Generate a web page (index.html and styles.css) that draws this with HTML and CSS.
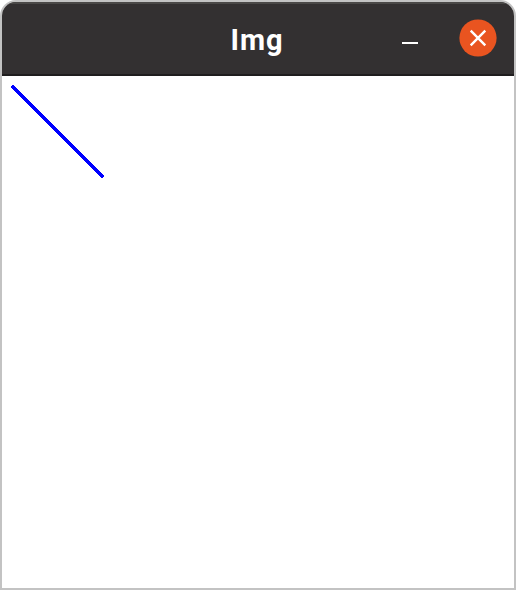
FILE: index.html
```html
<!DOCTYPE html>
<html lang="en">
<head>
<meta charset="utf-8">
<title>Img</title>
<link rel="stylesheet" href="styles.css">
</head>
<body>
<div class="window">
  <header class="titlebar">
    <h1 class="title">Img</h1>
    <div class="controls">
      <button class="minimize" aria-label="Minimize"></button>
      <button class="close" aria-label="Close">
        <svg width="38" height="38" viewBox="0 0 38 38"><circle cx="19" cy="19" r="18.6"/><path d="M11.7 11.7l14.6 14.6M26.3 11.7L11.7 26.3"/></svg>
      </button>
    </div>
  </header>
  <main class="canvas">
    <svg width="512" height="512" viewBox="0 0 512 512"><path d="M11 11L100 100"/></svg>
  </main>
</div>
</body>
</html>
```

FILE: styles.css
```css
* { box-sizing: border-box; }
body { margin: 0; background: #fff; }
.window {
  width: 516px;
  height: 590px;
  border: 2px solid #c3c3c3;
  border-radius: 16px 16px 0 0;
  overflow: hidden;
  background: #fff;
}
.titlebar {
  display: grid;
  grid-template-columns: 1fr auto 1fr;
  align-items: center;
  height: 74px;
  background: #333031;
  border-top: 2px solid #4a4847;
  border-bottom: 2px solid #1f1d1e;
}
.title {
  grid-column: 2;
  margin: 2px 2px 0 0;
  color: #fff;
  font: bold 29px/40px Roboto, "Open Sans", sans-serif;
  letter-spacing: 1px;
}
.controls {
  display: flex;
  justify-content: flex-end;
  align-items: center;
  gap: 41px;
  padding-right: 17px;
}
button { padding: 0; border: 0; background: none; }
.minimize { width: 16px; height: 2px; margin-top: 8px; background: #fff; }
.close { width: 38px; height: 38px; margin-top: -2px; }
svg { display: block; }
.close circle { fill: #e95420; }
.close path { stroke: #fff; stroke-width: 2.4; }
.canvas { height: 512px; }
.canvas path { stroke: #00f; stroke-width: 3.8; stroke-linecap: round; shape-rendering: crispEdges; }
```
